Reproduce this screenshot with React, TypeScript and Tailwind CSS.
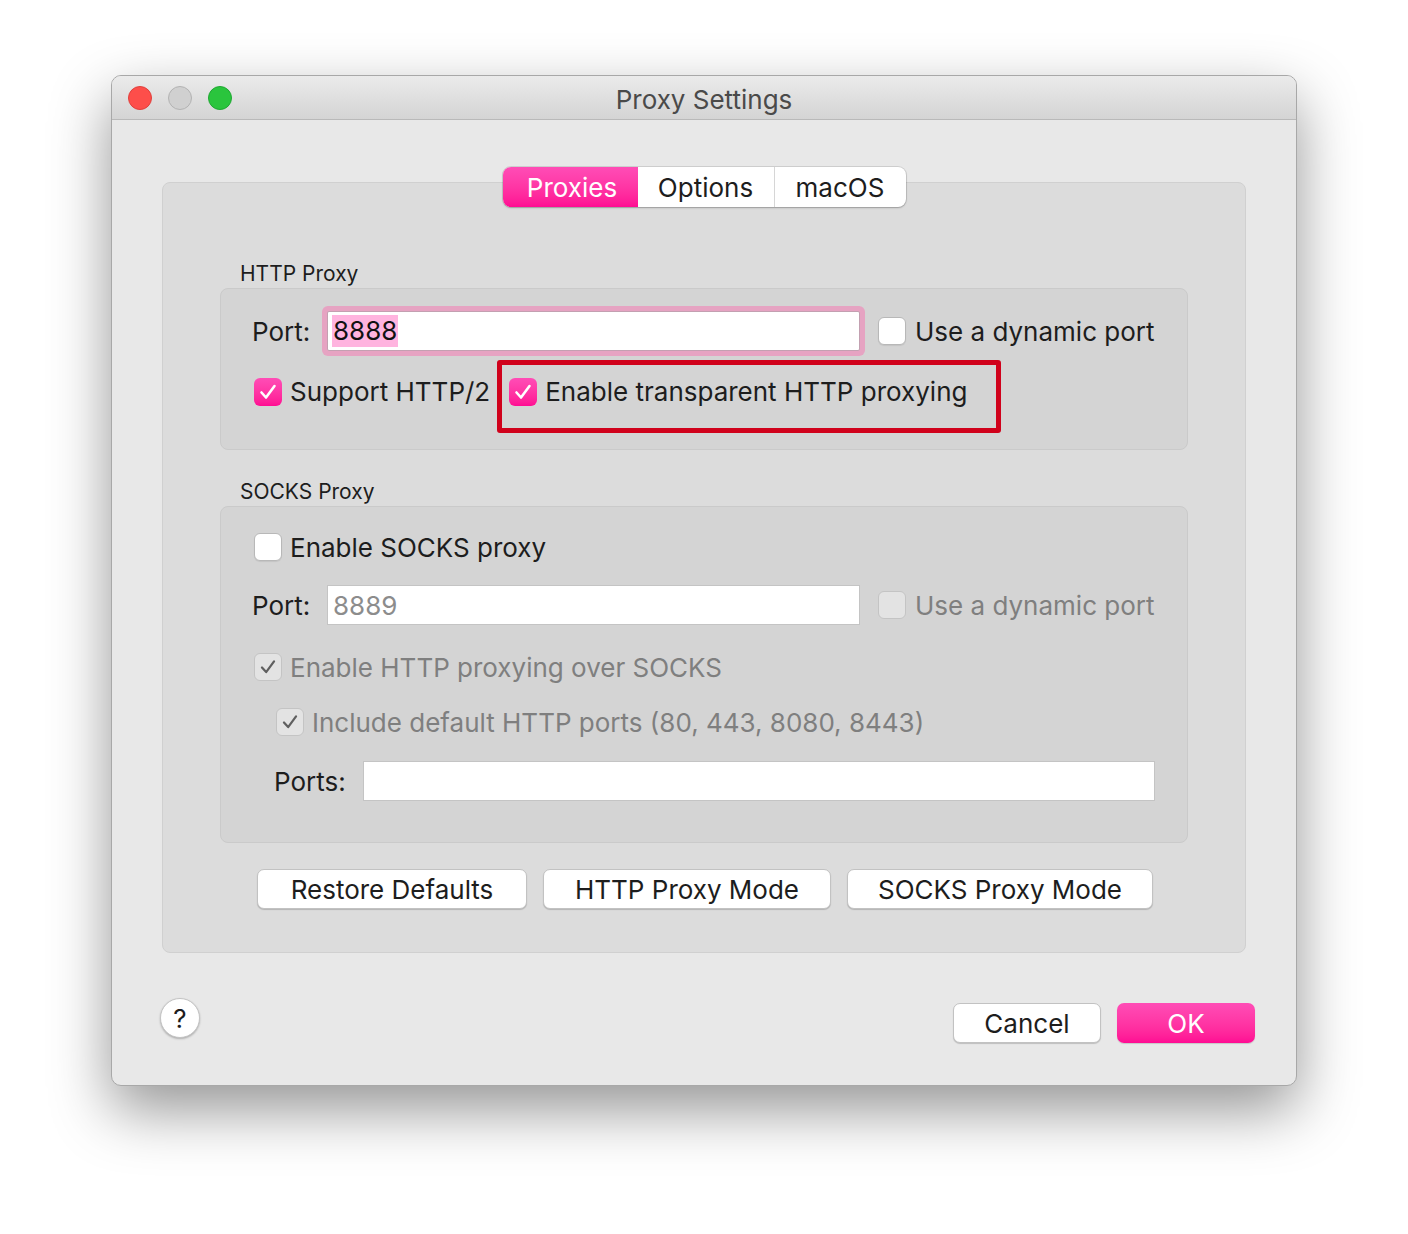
import React from "react";

function CheckMark({ color, width }: { color: string; width: number }) {
  return (
    <svg viewBox="0 0 28 28" className="h-[28px] w-[28px]">
      <path d="M7.5 14.5 L12 19.5 L20.5 8" fill="none" stroke={color} strokeWidth={width} strokeLinecap="round" strokeLinejoin="round" />
    </svg>
  );
}

function Checkbox({ checked = false, disabled = false, className = "" }: { checked?: boolean; disabled?: boolean; className?: string }) {
  if (checked && !disabled) {
    return (
      <span className={"flex h-[28px] w-[28px] shrink-0 items-center justify-center rounded-[6px] bg-linear-to-b from-[#ff4cb6] to-[#ff0a93] " + className}>
        <CheckMark color="#ffffff" width={2.6} />
      </span>
    );
  }
  if (disabled) {
    return (
      <span className={"flex h-[28px] w-[28px] shrink-0 items-center justify-center rounded-[6px] border border-[#c4c4c4] bg-[#e3e3e3] " + className}>
        {checked ? <CheckMark color="#5f5f5f" width={2.4} /> : null}
      </span>
    );
  }
  return (
    <span className={"block h-[28px] w-[28px] shrink-0 rounded-[6px] border border-[#b8b8b8] bg-white shadow-[0_1px_1px_rgba(0,0,0,0.08)] " + className} />
  );
}

function PushButton({ children, w }: { children: React.ReactNode; w: string }) {
  return (
    <button className={"flex h-[40px] items-center justify-center rounded-[7px] border border-[#c2c2c2] bg-white text-[26px] text-[#1d1d1d] shadow-[0_1px_1px_rgba(0,0,0,0.18)] " + w}>
      {children}
    </button>
  );
}

export default function App() {
  return (
    <div className="min-h-[1234px] w-[1408px] bg-white pl-[111px] pt-[75px] font-['Inter',sans-serif] text-[#1d1d1d]">
      <div className="flex h-[1011px] w-[1186px] flex-col rounded-[10px] border border-[#a8a8a8] bg-[#e8e8e8] shadow-[0_24px_60px_rgba(0,0,0,0.42)]">
        {/* Title bar */}
        <div className="grid h-[44px] grid-cols-[1fr_auto_1fr] items-center rounded-t-[9px] border-b border-[#b9b9b9] bg-linear-to-b from-[#ebebeb] to-[#d4d4d4]">
          <div className="flex items-center gap-[16px] pl-[16px]">
            <span className="block h-[24px] w-[24px] rounded-full border border-[#e0403c] bg-[#fd4e4a]" />
            <span className="block h-[24px] w-[24px] rounded-full border border-[#b3b3b3] bg-[#d0d0d0]" />
            <span className="block h-[24px] w-[24px] rounded-full border border-[#1fa832] bg-[#2ac53d]" />
          </div>
          <div className="pt-[3px] text-[26px] text-[#4a4a4a]">Proxy Settings</div>
          <div />
        </div>

        {/* Content */}
        <div className="flex flex-col px-[50px]">
          <div className="mt-[62px] flex h-[771px] flex-col items-center rounded-[8px] border border-[#d0d0d0] bg-[#dcdcdc]">
            {/* Segmented control */}
            <div className="-mt-[16px] flex h-[40px] w-[403px] overflow-hidden rounded-[8px] bg-white text-[26px] shadow-[0_0_0_1px_rgba(0,0,0,0.1),0_1px_2px_rgba(0,0,0,0.22)]">
              <div className="flex w-[135px] items-center justify-center bg-linear-to-b from-[#ff4cb6] to-[#ff0a93] pl-[4px] text-white">Proxies</div>
              <div className="flex w-[137px] items-center justify-center border-r border-[#d6d6d6]">Options</div>
              <div className="flex flex-1 items-center justify-center">macOS</div>
            </div>

            <div className="flex w-[968px] flex-col">
              {/* HTTP Proxy */}
              <div className="ml-[20px] mt-[56px] h-[22px] text-[21px] leading-[22px]">HTTP Proxy</div>
              <div className="mt-[3px] h-[162px] rounded-[8px] border border-[#cacaca] bg-[#d4d4d4] pl-[31px] pt-[22px]">
                <div className="flex h-[40px] items-center">
                  <span className="w-[75px] text-[26px]">Port:</span>
                  <div className="flex h-[40px] w-[533px] items-center rounded-[2px] border border-[#c3a0b1] bg-white pl-[4px] ring-[5px] ring-[#e6a3c2]">
                    <span className="bg-[#ffb4df] px-[1px] text-[26px] leading-[32px] text-[#111]">8888</span>
                  </div>
                  <Checkbox className="ml-[18px]" />
                  <span className="ml-[9px] text-[26px]">Use a dynamic port</span>
                </div>
                <div className="mt-[27px] flex h-[28px] items-center">
                  <Checkbox className="ml-[2px]" checked />
                  <span className="ml-[8px] text-[26px] leading-[28px]">Support HTTP/2</span>
                  <div className="relative ml-[19px] flex h-[28px] items-center">
                    <Checkbox checked />
                    <span className="ml-[8px] text-[26px] leading-[28px]">Enable transparent HTTP proxying</span>
                    <span className="pointer-events-none absolute -bottom-[27px] -left-[12px] -right-[34px] -top-[18px] rounded-[3px] border-[5px] border-[#d0011b]" />
                  </div>
                </div>
              </div>

              {/* SOCKS Proxy */}
              <div className="ml-[20px] mt-[31px] h-[22px] text-[21px] leading-[22px]">SOCKS Proxy</div>
              <div className="mt-[3px] h-[337px] rounded-[8px] border border-[#cacaca] bg-[#d4d4d4] pl-[31px] pt-[26px]">
                <div className="flex h-[28px] items-center">
                  <Checkbox className="ml-[2px]" />
                  <span className="ml-[8px] text-[26px]">Enable SOCKS proxy</span>
                </div>
                <div className="mt-[24px] flex h-[40px] items-center">
                  <span className="w-[75px] text-[26px]">Port:</span>
                  <div className="flex h-[40px] w-[533px] items-center border border-[#c4c4c4] bg-white pl-[5px]">
                    <span className="text-[26px] text-[#8c8c8c]">8889</span>
                  </div>
                  <Checkbox className="ml-[18px]" disabled />
                  <span className="ml-[9px] text-[26px] text-[#7f7f7f]">Use a dynamic port</span>
                </div>
                <div className="mt-[28px] flex h-[28px] items-center">
                  <Checkbox className="ml-[2px]" checked disabled />
                  <span className="ml-[8px] text-[26px] text-[#7f7f7f]">Enable HTTP proxying over SOCKS</span>
                </div>
                <div className="mt-[27px] flex h-[28px] items-center">
                  <Checkbox className="ml-[24px]" checked disabled />
                  <span className="ml-[8px] text-[26px] text-[#7f7f7f]">Include default HTTP ports (80, 443, 8080, 8443)</span>
                </div>
                <div className="mt-[25px] flex h-[40px] items-center">
                  <span className="ml-[22px] w-[89px] text-[26px]">Ports:</span>
                  <div className="h-[40px] w-[792px] border border-[#c4c4c4] bg-white" />
                </div>
              </div>

              {/* Mode buttons */}
              <div className="mt-[26px] flex justify-center gap-[16px] pl-[2px]">
                <PushButton w="w-[270px]">Restore Defaults</PushButton>
                <PushButton w="w-[288px]">HTTP Proxy Mode</PushButton>
                <PushButton w="w-[306px]">SOCKS Proxy Mode</PushButton>
              </div>
            </div>
          </div>

          {/* Footer */}
          <div className="mt-[45px] flex items-start justify-between">
            <button className="-ml-[2px] flex h-[40px] w-[40px] items-center justify-center rounded-full border border-[#c4c4c4] bg-white text-[26px] shadow-[0_1px_2px_rgba(0,0,0,0.25)]">
              ?
            </button>
            <div className="-mr-[9px] mt-[5px] flex gap-[16px]">
              <PushButton w="w-[148px]">Cancel</PushButton>
              <button className="flex h-[40px] w-[138px] items-center justify-center rounded-[7px] bg-linear-to-b from-[#ff4cb6] to-[#ff0a93] text-[26px] text-white shadow-[0_1px_1px_rgba(0,0,0,0.15)]">
                OK
              </button>
            </div>
          </div>
        </div>
      </div>
    </div>
  );
}
